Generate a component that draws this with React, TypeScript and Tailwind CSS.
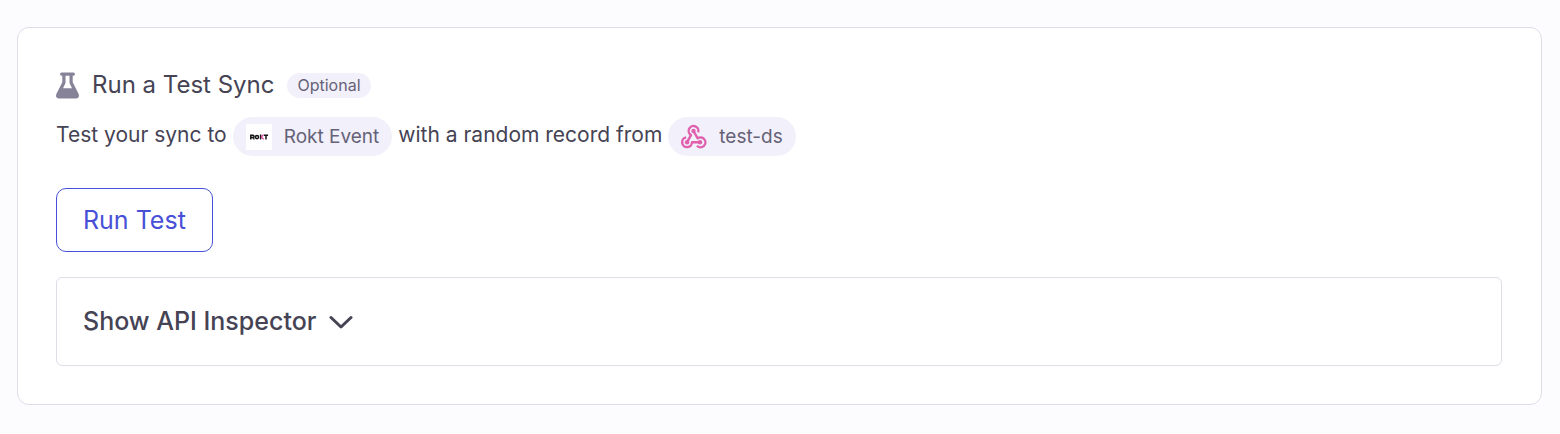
import React, { useState } from "react";

// ---------------------------------------------------------------------------
// Icons
// ---------------------------------------------------------------------------

function FlaskIcon() {
  return (
    <svg viewBox="0 0 23 27" className="h-[27px] w-[23px] shrink-0 text-[#868399]" fill="currentColor" aria-hidden="true">
      <path
        fillRule="evenodd"
        d="M5.6 0.5h11.8a1.3 1.3 0 0 1 0 3.2h-0.7v6.6l5.7 11.3c1.3 2.7 0.2 4.9-2.6 4.9H3.2c-2.8 0-3.9-2.2-2.6-4.9L6.3 10.3V3.7H5.6a1.3 1.3 0 0 1 0-3.2zM9.5 3.7v7.2L7 16.3h9l-2.5-5.4V3.7z"
      />
    </svg>
  );
}

function RoktLogo() {
  return (
    <svg viewBox="0 0 26 26" className="size-[26px] shrink-0" aria-hidden="true">
      <rect width="26" height="26" fill="#fff" />
      <g fill="none" stroke="#151515" strokeWidth="1.5">
        <path d="M4.8 15.4v-4.1h2.1a0.9 0.9 0 0 1 0 2.3H5.2M6.8 13.4l1.5 2" />
        <ellipse cx="11" cy="13.1" rx="1.5" ry="1.7" />
        <path d="M14.6 10.5v4.9" />
        <path d="M17.9 11.2h4.2M20 11.2v4.2" />
      </g>
      <path d="M17.5 10.7l-2.2 2.3 2.4 2.4" fill="none" stroke="#d6409f" strokeWidth="1.2" />
    </svg>
  );
}

function WebhookIcon() {
  return (
    <svg viewBox="0 0 26 26" className="size-[26px] shrink-0 text-[#e060ae]" aria-hidden="true">
      <g fill="none" stroke="currentColor" strokeWidth="2.4" strokeLinejoin="round">
        <path d="M17.2 8.4A4.9 4.9 0 1 0 10 11.1L6.1 18.2" />
        <path d="M12.5 7l4.2 7.3A4.9 4.9 0 1 1 15.9 21.7" />
        <path d="M5.2 13.4A4.9 4.9 0 1 0 11 18.2H19" />
      </g>
      <g fill="currentColor">
        <circle cx="12.5" cy="7" r="2.2" />
        <circle cx="6.1" cy="18.2" r="2.2" />
        <circle cx="19" cy="18.2" r="2.2" />
      </g>
    </svg>
  );
}

function ChevronIcon({ open }: { open: boolean }) {
  return (
    <svg
      viewBox="0 0 24 14"
      className={open ? "h-[14px] w-6 rotate-180" : "h-[14px] w-6"}
      fill="none"
      stroke="currentColor"
      strokeWidth={3}
      strokeLinecap="round"
      strokeLinejoin="round"
      aria-hidden="true"
    >
      <path d="M2 2.5l10 9.5 10-9.5" />
    </svg>
  );
}

// ---------------------------------------------------------------------------
// Pill
// ---------------------------------------------------------------------------

function Pill({ icon, children }: { icon: React.ReactNode; children: React.ReactNode }) {
  return (
    <span className="flex h-[39px] items-center gap-3 rounded-full bg-[#f2f0fa] px-[13px] text-[19px] text-[#656278]">
      {icon}
      {children}
    </span>
  );
}

// ---------------------------------------------------------------------------
// Page
// ---------------------------------------------------------------------------

export default function App() {
  const [inspectorOpen, setInspectorOpen] = useState(false);

  return (
    <main className="min-h-screen bg-[#fcfcfe] py-[27px] pr-[18px] pl-[17px] font-['Inter',sans-serif] text-[#454354]">
      <section className="rounded-xl border border-[#dfdde9] bg-white pt-[41px] pr-[39px] pb-[38px] pl-[38px]">
        <header className="flex items-center gap-[13px]">
          <FlaskIcon />
          <h1 className="text-[24px] leading-8">Run a Test Sync</h1>
          <span className="rounded-full bg-[#f2f0fa] px-[10px] text-[16px] leading-[25px] text-[#656278]">
            Optional
          </span>
        </header>

        <p className="mt-4 flex flex-wrap items-start gap-[6px] text-[21px] leading-9">
          <span>Test your sync to</span>
          <Pill icon={<RoktLogo />}>Rokt Event</Pill>
          <span>with a random record from</span>
          <Pill icon={<WebhookIcon />}>test-ds</Pill>
        </p>

        <button
          type="button"
          className="mt-8 rounded-[10px] border border-[#4850d8] px-[26px] py-[15px] text-[25px] leading-8 text-[#4850d8]"
        >
          Run Test
        </button>

        <div className="mt-[25px] rounded-md border border-[#dfdde9]">
          <button
            type="button"
            aria-expanded={inspectorOpen}
            onClick={() => setInspectorOpen(!inspectorOpen)}
            className="flex w-full items-center gap-[13px] px-[26px] py-7 text-left text-[25px] leading-[31px] font-medium"
          >
            Show API Inspector
            <ChevronIcon open={inspectorOpen} />
          </button>
        </div>
      </section>
    </main>
  );
}
